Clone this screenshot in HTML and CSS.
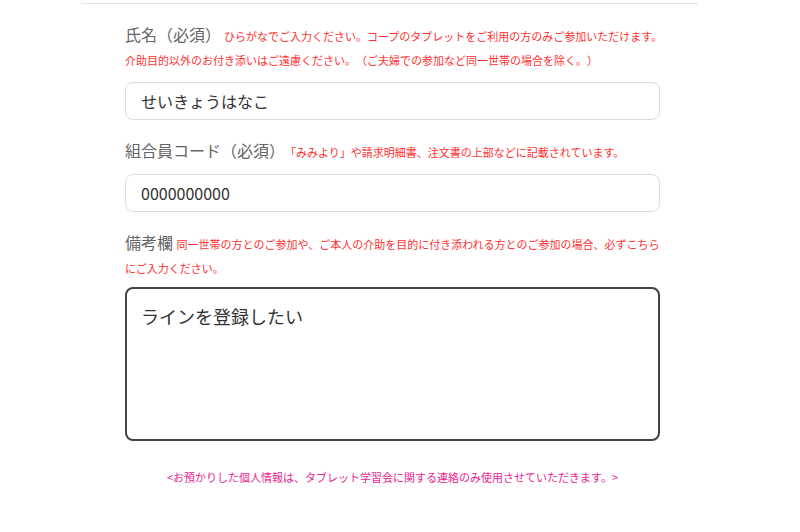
FILE: index.html
```html
<!DOCTYPE html>
<html lang="ja">
<head>
    <meta charset="UTF-8">
    <meta name="viewport" content="width=device-width, initial-scale=1.0">
    <title>タブレット学習会 参加申込</title>
    <link rel="stylesheet" href="styles.css">
</head>
<body>
    <div class="container">
        <form class="entry-form">
            <div class="field">
                <label class="field-label" for="name">氏名（必須）<span class="note note-gap">ひらがなでご入力ください。コープのタブレットをご利用の方のみご参加いただけます。介助目的以外のお付き添いはご遠慮ください。（ご夫婦での参加など同一世帯の場合を除く。）</span></label>
                <input type="text" id="name" class="text-input" value="せいきょうはなこ">
            </div>
            <div class="field">
                <label class="field-label" for="code">組合員コード（必須）<span class="note">「みみより」や請求明細書、注文書の上部などに記載されています。</span></label>
                <input type="text" id="code" class="text-input" value="0000000000">
            </div>
            <div class="field field-memo">
                <label class="field-label" for="memo">備考欄 <span class="note">同一世帯の方とのご参加や、ご本人の介助を目的に付き添われる方とのご参加の場合、必ずこちらにご入力ください。</span></label>
                <textarea id="memo" class="memo-input">ラインを登録したい</textarea>
            </div>
            <p class="privacy">&lt;お預かりした個人情報は、タブレット学習会に関する連絡のみ使用させていただきます。&gt;</p>
        </form>
    </div>
</body>
</html>
```

FILE: styles.css
```css
body {
    font-family: "Noto Sans CJK JP", "Noto Sans", sans-serif;
    background-color: #fff;
    color: #333;
    margin: 0;
    padding: 0;
    text-spacing-trim: space-all;
}
.container {
    width: 617px;
    margin-left: 81px;
    border-top: 1px solid #e2e2e2;
    margin-top: 3px;
}
.entry-form {
    width: 535px;
    padding: 18px 0 0 44px;
}
.field {
    margin-bottom: 18px;
}
.field-label {
    display: block;
    margin-right: -8px;
    font-size: 16px;
    line-height: 24px;
    color: #666;
    margin-bottom: 12px;
}
.note {
    font-size: 11px;
    line-height: 1;
    color: #ff3030;
}
.note-gap {
    margin-left: 3px;
}
.text-input {
    display: block;
    box-sizing: border-box;
    width: 100%;
    height: 38px;
    padding: 0 15px;
    font-family: inherit;
    font-size: 16px;
    color: #333;
    border: 1px solid #ddd;
    border-radius: 8px;
    background-color: #fff;
    outline: none;
}
.field-memo .field-label {
    margin-bottom: 9px;
}
.memo-input {
    display: block;
    box-sizing: border-box;
    width: 100%;
    height: 154px;
    padding: 14px 14px;
    font-family: inherit;
    font-size: 18px;
    line-height: 27px;
    color: #333;
    border: 2px solid #444;
    border-radius: 8px;
    resize: none;
    outline: none;
}
.privacy {
    margin: 28px 0 0;
    text-align: center;
    font-size: 11px;
    color: #e8258f;
}
```
